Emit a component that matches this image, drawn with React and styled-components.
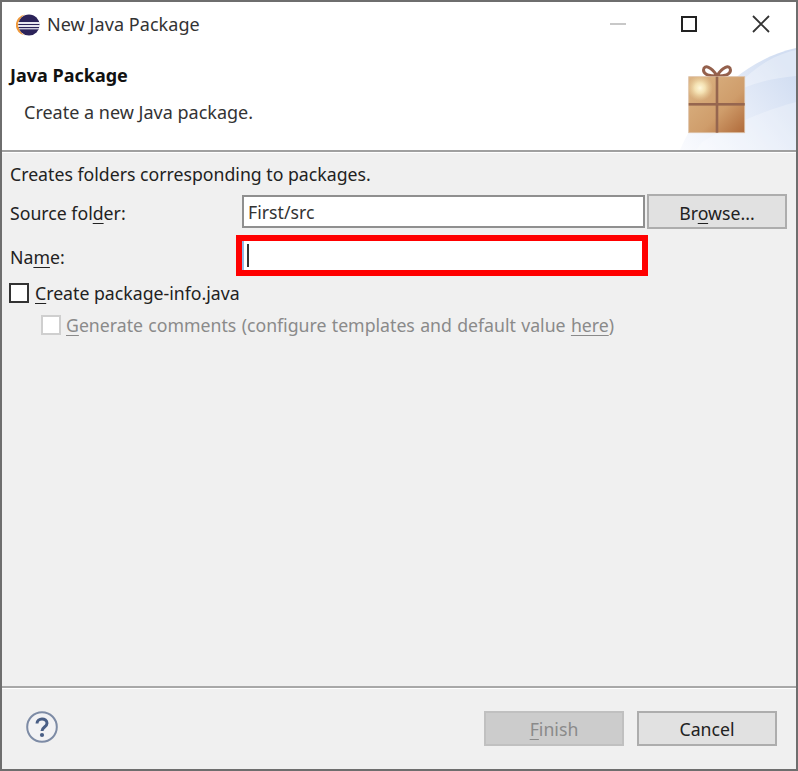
import React from "react";
import styled, { createGlobalStyle } from "styled-components";

const Global = createGlobalStyle`
  html, body { margin: 0; padding: 0; background: #fff; }
  * { box-sizing: border-box; }
`;

const Dialog = styled.div`
  width: 798px;
  height: 771px;
  display: flex;
  flex-direction: column;
  border: 2px solid #6e6e6e;
  background: #f0f0f0;
  color: #222;
  font-family: "Noto Sans", "Open Sans", sans-serif;
  font-size: 18px;
  line-height: 24px;
  overflow: hidden;
`;

const TitleBar = styled.div`
  height: 46px;
  flex: none;
  display: flex;
  align-items: center;
  background: #fff;
  padding-left: 14px;
`;

const TitleText = styled.span`
  margin-left: 7px;
  color: #333;
  flex: 1;
  position: relative;
  top: -1px;
  letter-spacing: 0.06px;
`;

const WinButton = styled.div`
  width: ${(p) => p.$w}px;
  height: 44px;
  display: flex;
  align-items: center;
  justify-content: center;
  position: relative;
  top: -1px;
`;

const WinControls = styled.div`
  display: flex;
`;

const Header = styled.div`
  position: relative;
  height: 104px;
  flex: none;
  background: #fff;
  padding: 15px 0 0 8px;
  border-bottom: 2px solid #a0a0a0;
  box-shadow: 0 1px 0 #fff;
`;

const HeaderTitle = styled.div`
  font-weight: 700;
  color: #111;
  line-height: 24px;
`;

const HeaderText = styled.div`
  margin: 13px 0 0 14px;
  color: #333;
`;

const Banner = styled.svg`
  position: absolute;
  right: 0;
  top: 0;
`;

const Body = styled.div`
  flex: 1;
  padding: 10px 9px 0 8px;
  display: flex;
  flex-direction: column;
  font-size: 17.7px;
`;

const Intro = styled.div`
  height: 24px;
`;

const FormGrid = styled.div`
  margin-top: 8px;
  display: grid;
  grid-template-columns: 226px 411px 140px;
  grid-template-rows: 35px 41px;
  row-gap: 6px;
  align-items: center;
`;

const Label = styled.div`
  position: relative;
  top: 1px;
`;

const SourceField = styled.div`
  height: 33px;
  margin-left: 6px;
  width: 403px;
  border: 2px solid #8f8f8f;
  background: #fff;
  padding-left: 4px;
  line-height: 30px;
  color: #333;
`;

const NameField = styled.div`
  height: 41px;
  width: 412px;
  border: 6px solid #ff0000;
  background: #fff;
  display: flex;
  align-items: center;
`;

const FocusEdge = styled.div`
  width: 2px;
  height: 100%;
  background: #8fbbe8;
`;

const Caret = styled.div`
  width: 2px;
  height: 23px;
  margin: -1px 0 0 3px;
  background: #333;
`;

const Button = styled.div`
  width: 140px;
  height: 35px;
  padding-top: ${(p) => p.$nudge || 0}px;
  display: flex;
  align-items: center;
  justify-content: center;
  font-size: 17.7px;
  border: 2px solid ${(p) => (p.$disabled ? "#c0c0c0" : "#adadad")};
  background: ${(p) => (p.$disabled ? "#cccccc" : "#e1e1e1")};
  color: ${(p) => (p.$disabled ? "#8a8a8a" : "#222")};
`;

const CheckRow = styled.div`
  display: flex;
  align-items: center;
  height: 22px;
  margin-left: ${(p) => p.$indent}px;
  margin-top: ${(p) => p.$top}px;
  color: ${(p) => (p.$disabled ? "#8a8a8a" : "#222")};
  word-spacing: ${(p) => (p.$disabled ? "0.7px" : "0")};
`;

const CheckBox = styled.div`
  width: 20px;
  height: 20px;
  flex: none;
  margin-right: ${(p) => (p.$disabled ? 5 : 6)}px;
  background: #fff;
  border: 2px solid ${(p) => (p.$disabled ? "#cfcfcf" : "#333")};
`;

const Mnemonic = styled.span`
  text-decoration: underline;
  text-underline-offset: 3px;
  text-decoration-thickness: 1px;
`;

const Footer = styled.div`
  height: 83px;
  flex: none;
  border-top: 2px solid #a8a8a8;
  box-shadow: inset 0 1px 0 #fff;
  display: flex;
  align-items: flex-start;
  padding: 23px 19px 0 24px;
  gap: 13px;
`;

const HelpButton = styled.svg`
  margin-right: auto;
`;

const EclipseIcon = () => (
  <svg width="24" height="24" viewBox="0 0 24 24">
    <path d="M9 1.5 A10.6 10.6 0 0 0 9 22.5 A12 12 0 0 1 9 1.5 Z" fill="#f09a3c" />
    <circle cx="13" cy="12" r="10.6" fill="#2c2359" />
    <rect x="2" y="9" width="22" height="2" fill="#e8e6ef" />
    <rect x="2" y="12" width="22" height="2" fill="#e8e6ef" />
    <rect x="3" y="15" width="20" height="1.4" fill="#c9c5d8" />
  </svg>
);

const GiftBanner = () => (
  <Banner width="140" height="102" viewBox="0 0 140 102">
    <defs>
      <linearGradient id="sw1" x1="0" y1="1" x2="1" y2="0.3">
        <stop offset="0" stopColor="#fafbfe" />
        <stop offset="0.5" stopColor="#e8eef9" />
        <stop offset="1" stopColor="#d2def2" />
      </linearGradient>
      <linearGradient id="box" x1="0" y1="0" x2="1" y2="1">
        <stop offset="0" stopColor="#dcb585" />
        <stop offset="0.6" stopColor="#cf9d6b" />
        <stop offset="1" stopColor="#b06a3a" />
      </linearGradient>
      <radialGradient id="glow" cx="0.5" cy="0.5" r="0.5">
        <stop offset="0" stopColor="#fff8dc" />
        <stop offset="0.4" stopColor="#fbeec0" stopOpacity="0.8" />
        <stop offset="1" stopColor="#f0d8a4" stopOpacity="0" />
      </radialGradient>
    </defs>
    <path d="M24 102 C38 68 78 14 140 0 V102 Z" fill="url(#sw1)" />
    <path d="M72 48 C92 36 116 30 140 28 V2 C112 8 90 26 72 48 Z" fill="#fff" fillOpacity="0.3" />
    <path d="M46 94 C76 76 110 62 140 54 V102 H40 Z" fill="#fff" fillOpacity="0.25" />
    <path
      d="M61 28 C56 19 48 16 47.5 22 C47.5 27 55 28 61 28 C67 28 74.5 27 74.5 22 C74 16 66 19 61 28 Z"
      fill="none"
      stroke="#94604c"
      strokeWidth="3"
    />
    <rect x="32.7" y="28.7" width="56" height="56" fill="url(#box)" stroke="#dcc0a6" strokeWidth="0.8" />
    <circle cx="44" cy="40" r="13" fill="url(#glow)" />
    <rect x="59.7" y="28.7" width="2.6" height="56" fill="#96664f" />
    <rect x="32.7" y="55" width="56" height="2.6" fill="#96664f" />
  </Banner>
);

const App = () => (
  <>
    <Global />
    <Dialog>
      <TitleBar>
        <EclipseIcon />
        <TitleText>New Java Package</TitleText>
        <WinControls>
          <WinButton $w={68}>
            <svg width="18" height="18" viewBox="0 0 18 18">
              <rect x="1" y="8" width="16" height="2" fill="#c8c8c8" />
            </svg>
          </WinButton>
          <WinButton $w={73}>
            <svg width="18" height="18" viewBox="0 0 18 18">
              <rect x="2" y="2" width="14" height="14" fill="none" stroke="#222" strokeWidth="2" />
            </svg>
          </WinButton>
          <WinButton $w={71}>
            <svg width="18" height="18" viewBox="0 0 18 18">
              <path d="M1 1 L17 17 M17 1 L1 17" stroke="#333" strokeWidth="1.8" fill="none" />
            </svg>
          </WinButton>
        </WinControls>
      </TitleBar>
      <Header>
        <GiftBanner />
        <HeaderTitle>Java Package</HeaderTitle>
        <HeaderText>Create a new Java package.</HeaderText>
      </Header>
      <Body>
        <Intro>Creates folders corresponding to packages.</Intro>
        <FormGrid>
          <Label>
            Source fol<Mnemonic>d</Mnemonic>er:
          </Label>
          <SourceField>First/src</SourceField>
          <Button $nudge={2}>
            <span>
              Br<Mnemonic>o</Mnemonic>wse...
            </span>
          </Button>
          <Label>
            Na<Mnemonic>m</Mnemonic>e:
          </Label>
          <NameField>
            <FocusEdge />
            <Caret />
          </NameField>
          <span />
        </FormGrid>
        <CheckRow $top={6} $indent={-1}>
          <CheckBox />
          <span>
            <Mnemonic>C</Mnemonic>reate package-info.java
          </span>
        </CheckRow>
        <CheckRow $top={10} $indent={31} $disabled>
          <CheckBox $disabled />
          <span>
            <Mnemonic>G</Mnemonic>enerate comments (configure templates and default value{" "}
            <Mnemonic>here</Mnemonic>)
          </span>
        </CheckRow>
      </Body>
      <Footer>
        <HelpButton width="32" height="32" viewBox="0 0 32 32">
          <circle cx="16" cy="16" r="14.8" fill="#f2f2f4" stroke="#7d8ba5" strokeWidth="2" />
          <path d="M11 12.5 C11 6.5 21 6.5 21 12.2 C21 16 16 16 16 20" fill="none" stroke="#4a5f86" strokeWidth="3" />
          <circle cx="16" cy="24" r="2.1" fill="#4a5f86" />
        </HelpButton>
        <Button $disabled>
          <span>
            <Mnemonic>F</Mnemonic>inish
          </span>
        </Button>
        <Button>Cancel</Button>
      </Footer>
    </Dialog>
  </>
);

export default App;
